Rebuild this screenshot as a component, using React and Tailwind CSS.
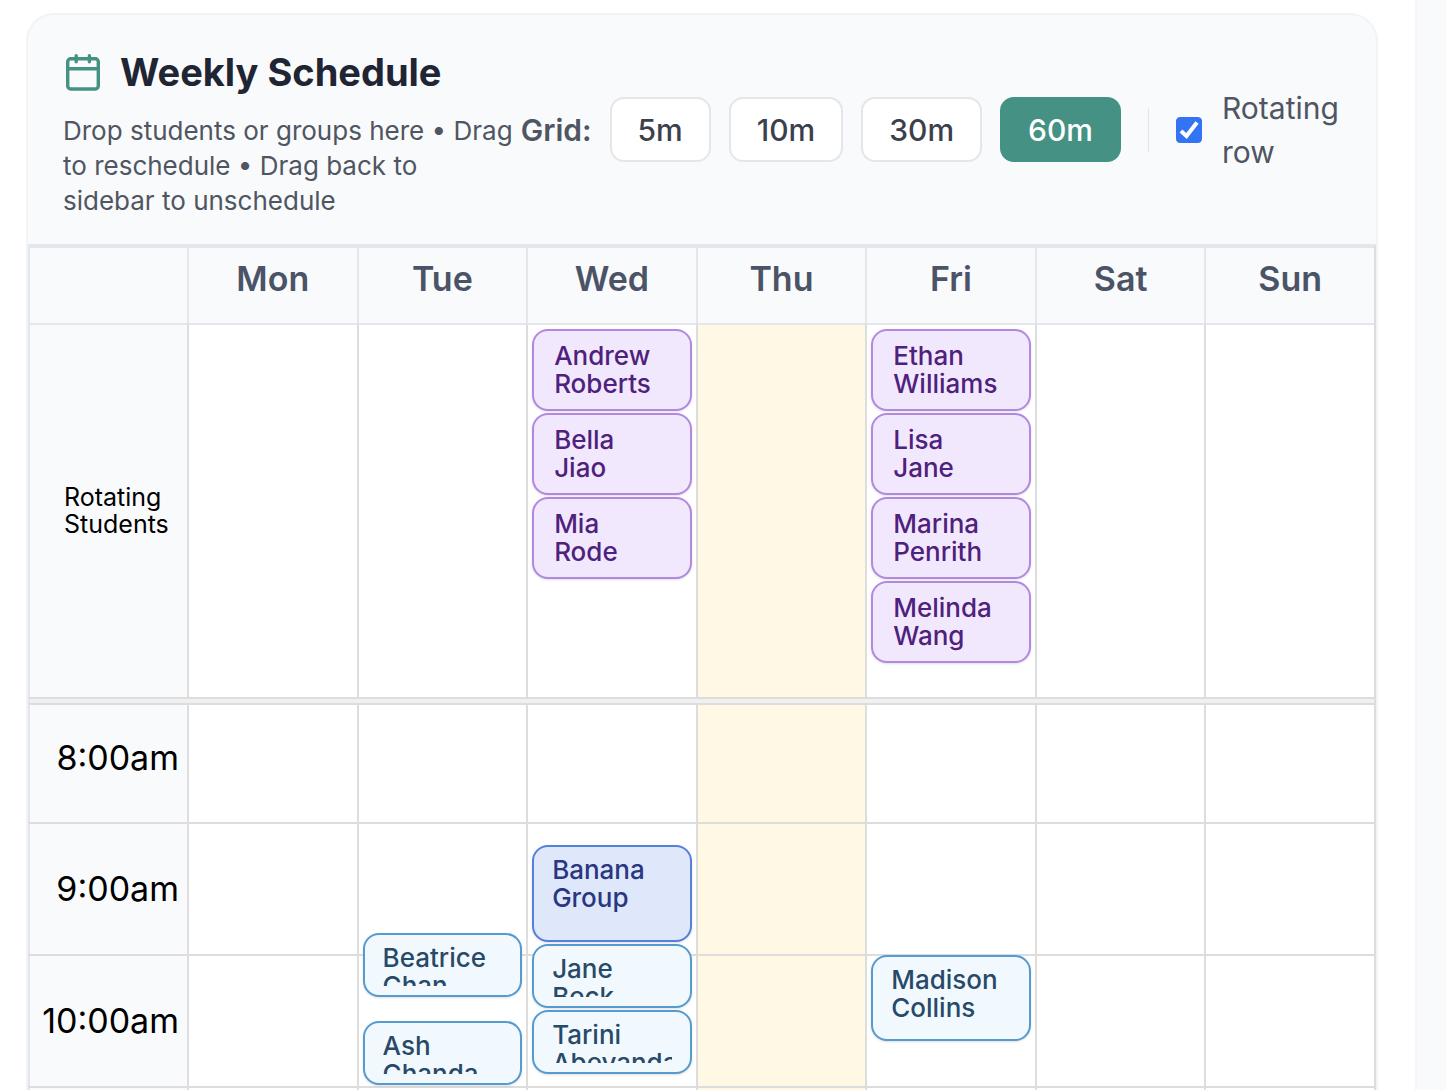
import React, { useState } from 'react';

const days = ['Mon', 'Tue', 'Wed', 'Thu', 'Fri', 'Sat', 'Sun'];
const today = 'Thu';
const gridSizes = [5, 10, 30, 60];

const rotating = {
  Wed: ['Andrew Roberts', 'Bella Jiao', 'Mia Rode'],
  Fri: ['Ethan Williams', 'Lisa Jane', 'Marina Penrith', 'Melinda Wang'],
};

const hours = [
  { hour: 8, label: '8:00am', row: 'h-[119px]', pad: 'pb-3' },
  { hour: 9, label: '9:00am', row: 'h-[132px]', pad: 'pb-0' },
  { hour: 10, label: '10:00am', row: 'h-[132px]', pad: 'pb-0' },
  { hour: 11, label: '', row: 'h-[132px]', pad: 'pb-0' },
];

// start is in minutes after the hour
const lessons = [
  { day: 'Wed', hour: 9, start: 10, length: 45, name: 'Banana Group', group: true },
  { day: 'Tue', hour: 9, start: 50, length: 30, name: 'Beatrice Chan' },
  { day: 'Wed', hour: 9, start: 55, length: 30, name: 'Jane Beck' },
  { day: 'Fri', hour: 10, start: 0, length: 40, name: 'Madison Collins' },
  { day: 'Wed', hour: 10, start: 25, length: 30, name: 'Tarini Abeyandara' },
  { day: 'Tue', hour: 10, start: 30, length: 30, name: 'Ash Chanda' },
];

const PX_PER_MINUTE = 2.2;

const CalendarIcon = () => (
  <svg viewBox="0 0 34 37" className="w-[34px] h-[37px] shrink-0" fill="none" stroke="#459184" strokeWidth="3.4" strokeLinecap="round" aria-hidden="true">
    <rect x="1.7" y="4.700" width="30.600" height="30.300" rx="3" />
    <path d="M2 14.800h30M10.200 1.700v6M23.400 1.700v6" />
  </svg>
);

const Name = ({ name }) => {
  const [first, last] = name.split(' ');
  return (
    <>
      <span className="block">{first}</span>
      <span className="block">{last}</span>
    </>
  );
};

const Lesson = ({ lesson }) => (
  <div
    className={`absolute inset-x-1 z-10 rounded-[16px] border-2 px-[18px] pt-[9px] pb-[9px] shadow-sm text-[26px] leading-[28px] font-medium ${
      lesson.group
        ? 'bg-[#dfe8fb] border-[#5580dc] text-[#293681]'
        : 'bg-[#f2f9fe] border-[#559bd0] text-[#284a69]'
    }`}
    style={{
      top: Math.round(lesson.start * PX_PER_MINUTE) - 1,
      height: Math.round(lesson.length * PX_PER_MINUTE) - 2,
    }}
  >
    <div className="h-full overflow-hidden">
      <Name name={lesson.name} />
    </div>
  </div>
);

const App = () => {
  const [gridSize, setGridSize] = useState(60);
  const [showRotating, setShowRotating] = useState(true);

  return (
    <div className="flex h-screen overflow-hidden bg-white font-[Inter,sans-serif]">
      <main className="flex-1 min-w-0 pt-[13px] pl-[26px] pr-[37px]">
        <section className="rounded-t-[28px] border-2 border-b-0 border-[#f1f3f6] bg-[#f9fafc] overflow-hidden">
          {/* Header */}
          <header className="flex items-center justify-between pl-[35px] pr-9 py-[26px] border-b-2 border-[#e3e6ec]">
            <div className="w-[451px] shrink-0">
              <div className="flex items-center gap-5 pl-[3px]">
                <CalendarIcon />
                <h2 className="text-[38px] leading-[62px] font-bold text-[#1f2533] whitespace-nowrap">Weekly Schedule</h2>
              </div>
              <p className="mt-[10px] text-[26px] leading-[35px] text-[#4f5561]">
                Drop students or groups here • Drag to reschedule • Drag back to sidebar to unschedule
              </p>
            </div>

            <div className="flex items-center shrink-0">
              <span className="text-[30px] leading-[44px] font-semibold text-[#4f5561]">Grid:</span>
              <div className="flex gap-[18px] ml-[18px]">
                {gridSizes.map((size) => (
                  <button
                    key={size}
                    type="button"
                    onClick={() => setGridSize(size)}
                    className={`h-[65px] px-[26px] rounded-[14px] border-2 text-[30px] leading-[44px] font-medium ${
                      size === gridSize
                        ? 'bg-[#459184] border-[#459184] text-white'
                        : 'bg-white border-[#e5e6ea] text-[#3b404c]'
                    }`}
                  >
                    {size}m
                  </button>
                ))}
              </div>
              <div className="w-px h-11 bg-[#e3e5e9] mx-[27px]" />
              <label className="flex items-center gap-5 text-[30px] leading-[44px] text-[#4f5561]">
                <span className="relative size-[26px] shrink-0">
                  <input
                    type="checkbox"
                    checked={showRotating}
                    onChange={(e) => setShowRotating(e.target.checked)}
                    className="block size-[26px] appearance-none rounded-[4px] border border-[#767676] bg-white checked:border-[#3374f5] checked:bg-[#3374f5]"
                  />
                  {showRotating && (
                    <svg viewBox="0 0 26 26" className="absolute inset-0 pointer-events-none" fill="none" stroke="#fff" strokeWidth="4" aria-hidden="true">
                      <path d="M5 14l5.500 5L21 5.500" />
                    </svg>
                  )}
                </span>
                <span className="w-[118px]">Rotating row</span>
              </label>
            </div>
          </header>

          {/* Timetable */}
          <table className="w-full table-fixed border-separate border-spacing-0 border-r-2 border-r-[#dddddd] bg-white">
            <thead>
              <tr className="h-[77px] bg-[#f9fafc]">
                <th className="w-[159px] border-t-2 border-l-2 border-[#e3e6ec]" />
                {days.map((day) => (
                  <th
                    key={day}
                    className="border-t-2 border-l-2 border-[#e3e6ec] p-0 pt-2 align-top text-[34px] leading-[46px] font-semibold text-[#4b5366]"
                  >
                    {day}
                  </th>
                ))}
              </tr>
            </thead>
            <tbody>
              {showRotating && (
                <>
                  <tr className="h-[374px]">
                    <th className="border-t-2 border-l-2 border-[#e3e6ec] bg-[#f9fafc] p-0 pl-[34px] text-left text-[25px] leading-[27px] font-normal text-black">
                      Rotating Students
                    </th>
                    {days.map((day) => (
                      <td
                        key={day}
                        className={`border-t-2 border-l-2 border-t-[#e3e6ec] border-l-[#dddddd] p-1 align-top ${day === today ? 'bg-[#fef8e4]' : ''}`}
                      >
                        <div className="flex flex-col gap-[2px]">
                          {(rotating[day] || []).map((name) => (
                            <div
                              key={name}
                              className="h-[82px] rounded-[16px] border-2 border-[#b189e2] bg-[#f2e8fd] px-5 pt-[11px] shadow-sm text-[26px] leading-[28px] font-medium text-[#4e217c]"
                            >
                              <Name name={name} />
                            </div>
                          ))}
                        </div>
                      </td>
                    ))}
                  </tr>
                  <tr>
                    <td colSpan={8} className="h-[6px] border-t-2 border-l-2 border-t-[#dddddd] border-l-[#e3e6ec] bg-[#f0f0f0] p-0" />
                  </tr>
                </>
              )}
              {hours.map(({ hour, label, row, pad }) => (
                <tr key={hour} className={row}>
                  <th className={`border-t-2 border-l-2 border-t-[#dddddd] border-l-[#e3e6ec] bg-[#f9fafc] pt-0 pl-0 pr-2 ${pad} text-right text-[34px] leading-[46px] font-normal text-black`}>
                    {label}
                  </th>
                  {days.map((day) => (
                    <td
                      key={day}
                      className={`relative border-t-2 border-l-2 border-[#dddddd] p-0 ${day === today ? 'bg-[#fef8e4]' : ''}`}
                    >
                      {lessons
                        .filter((l) => l.day === day && l.hour === hour)
                        .map((l) => (
                          <Lesson key={l.name} lesson={l} />
                        ))}
                    </td>
                  ))}
                </tr>
              ))}
            </tbody>
          </table>
        </section>
      </main>
      <aside className="w-[31px] shrink-0 bg-[#f9fafc] border-l-2 border-[#f4f5f8]" />
    </div>
  );
};

export default App;
